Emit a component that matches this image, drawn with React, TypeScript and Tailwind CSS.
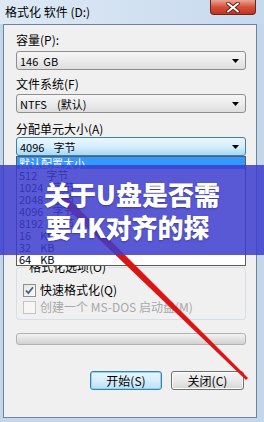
const sizes: [string, string][] = [
  ['默认配置大小', ''],
  ['512', '字节'],
  ['1024', '字节'],
  ['2048', '字节'],
  ['4096', '字节'],
  ['8192', '字节'],
  ['16', 'KB'],
  ['32', 'KB'],
  ['64', 'KB'],
];

function Arrow() {
  return (
    <svg width="7" height="4" viewBox="0 0 7 4" className="shrink-0">
      <path d="M0 0h7L3.5 4z" fill="#000" />
    </svg>
  );
}

function Combo({ focused, children }: { focused?: boolean; children: React.ReactNode }) {
  return (
    <div
      className={`w-[230px] h-[19px] flex items-center justify-between pl-[3px] pr-[6px] rounded-[3px] border text-[11px] leading-[12px] ${
        focused
          ? 'border-[#3c7fb1] bg-gradient-to-b from-[#eaf6fd] via-[#d4eefc] to-[#a9d8f4]'
          : 'border-[#8e8e8e] bg-gradient-to-b from-[#f6f6f6] via-[#ececec] to-[#dedede]'
      }`}
    >
      <div className="flex items-center whitespace-pre">{children}</div>
      <Arrow />
    </div>
  );
}

function Checkbox({ checked, disabled, label }: { checked?: boolean; disabled?: boolean; label: string }) {
  return (
    <div className="h-[14px] flex items-center gap-[4px]">
      <div
        className={`w-[13px] h-[13px] border flex items-center justify-center ${
          disabled
            ? 'border-[#c4c4c4] bg-[#f6f6f6]'
            : 'border-[#8e8f8f] bg-gradient-to-br from-[#e4e4e4] to-[#fbfbfb]'
        }`}
      >
        {checked && (
          <svg width="9" height="9" viewBox="0 0 9 9">
            <path d="M1 4.5l2.3 2.5L8 1.2" fill="none" stroke="#4a5f80" strokeWidth={1.8} />
          </svg>
        )}
      </div>
      <span className={`text-[12px] leading-[14px] ${disabled ? 'text-[#a8a8a8]' : 'text-black'}`}>{label}</span>
    </div>
  );
}

export default function App() {
  return (
    <div className="relative w-[264px] h-[422px] overflow-hidden bg-[#c3d7ec] text-black [font-family:'Noto_Sans_CJK_SC',sans-serif]">
      {/* title bar */}
      <div className="h-[24px] flex justify-between bg-gradient-to-r from-[#dde9f5] via-[#d2e1f1] to-[#c6d9ee]">
        <div className="pl-[5px] pt-[5px] text-[12px] leading-[14px]">格式化 软件 (D:)</div>
        <div className="mr-[8px] w-[46px] h-[15px] flex items-center justify-center rounded-b-[4px] border border-t-0 border-[#6a2418] bg-gradient-to-b from-[#e9a394] via-[#d4503a] to-[#c2331e]">
          <svg width="14" height="11" viewBox="0 0 14 11">
            <path d="M2 1.5l10 8M12 1.5l-10 8" stroke="#5a1a10" strokeWidth={3.6} strokeLinecap="round" />
            <path d="M2 1.5l10 8M12 1.5l-10 8" stroke="#fff" strokeWidth={2} strokeLinecap="round" />
          </svg>
        </div>
      </div>

      {/* client area */}
      <div className="ml-[3px] w-[254px] h-[394px] border border-[#70839b] bg-[#f0f0f0] pl-[12px]">
        <div className="mt-[8px] h-[14px] text-[12px] leading-[14px]">容量(P):</div>
        <div className="mt-[4px]">
          <Combo>
            <span>146</span>
            <span className="ml-[5px]">GB</span>
          </Combo>
        </div>

        <div className="mt-[7px] h-[14px] text-[12px] leading-[14px]">文件系统(F)</div>
        <div className="mt-[3px]">
          <Combo>
            <span>NTFS</span>
            <span className="ml-[10px]">(默认)</span>
          </Combo>
        </div>

        <div className="mt-[9px] h-[14px] text-[12px] leading-[14px]">分配单元大小(A)</div>
        <div className="relative mt-[1px]">
          <Combo focused>
            <span>4096</span>
            <span className="ml-[9px]">字节</span>
          </Combo>
          {/* open dropdown list */}
          <div className="absolute left-0 top-full z-10 w-[230px] border border-[#5c5c5c] bg-white">
            {sizes.map(([num, unit], i) => (
              <div
                key={num}
                className={`h-[12px] flex items-center pl-[2px] text-[11px] leading-[12px] ${
                  i === 0 ? 'bg-[#3399ff] text-white' : 'text-black'
                }`}
              >
                <span>{num}</span>
                {unit && <span className="ml-[9px]">{unit}</span>}
              </div>
            ))}
          </div>
        </div>

        <fieldset className="mt-[105px] w-[230px] border border-[#d5dfe5] rounded-[3px] pl-[6px] pb-[5px]">
          <legend className="ml-[4px] px-[2px] text-[12px] leading-[12px]">格式化选项(O)</legend>
          <div className="mt-[10px]">
            <Checkbox checked label="快速格式化(Q)" />
          </div>
          <div className="mt-[3px]">
            <Checkbox disabled label="创建一个 MS-DOS 启动盘(M)" />
          </div>
        </fieldset>

        <div className="mt-[13px] w-[230px] h-[12px] rounded-[3px] border border-[#b2b2b2] bg-gradient-to-b from-[#f2f2f2] via-[#e2e2e2] to-[#d2d2d2]" />

        <div className="mt-[26px] w-[228px] flex justify-end gap-[9px]">
          <button className="w-[72px] h-[19px] rounded-[3px] border border-[#3c7fb1] bg-gradient-to-b from-[#eaf6fd] via-[#d6eefb] to-[#b9e0f6] shadow-[inset_0_0_0_1px_#8ad4f0] text-[12px] leading-[14px]">
            开始(S)
          </button>
          <button className="w-[73px] h-[19px] rounded-[3px] border border-[#707070] bg-gradient-to-b from-[#f4f4f4] via-[#e9e9e9] to-[#d6d6d6] shadow-[inset_0_0_0_1px_#fcfcfc] text-[12px] leading-[14px]">
            关闭(C)
          </button>
        </div>
      </div>

      {/* red arrow line drawn over the screenshot */}
      <svg className="absolute inset-0 z-20" width="264" height="422" viewBox="0 0 264 422">
        <polygon points="57,199 63,193 248,378 246,380" fill="#dc1414" />
      </svg>

      {/* caption band */}
      <div className="absolute left-0 top-[165px] z-30 w-full h-[90px] bg-[#3c3cce]/85 flex flex-col items-center justify-center text-white font-black text-[26px] leading-[33px] [text-shadow:0_1px_2px_rgba(0,0,40,0.35)]">
        <div>关于U盘是否需</div>
        <div className="pr-[9px]">要4K对齐的探</div>
      </div>
    </div>
  );
}
